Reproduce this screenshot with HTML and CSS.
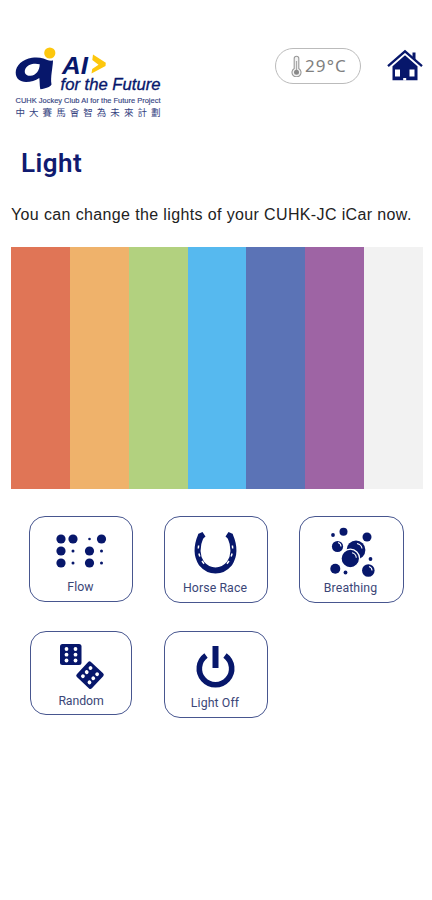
FILE: index.html
```html
<!DOCTYPE html>
<html lang="en">
<head>
<meta charset="utf-8">
<meta name="viewport" content="width=device-width, initial-scale=1">
<title>Light</title>
<link rel="stylesheet" href="styles.css">
</head>
<body>
<header class="top">
  <svg class="logo" viewBox="14 44 150 76" role="img" aria-label="AI for the Future">
    <circle cx="49.800" cy="53" r="5.600" fill="#fdc70d"/>
    <path class="ink" fill-rule="evenodd" d="M43.500 58.500C40 57.300 36 57.200 32 57.700C22.500 59.200 15.700 65.500 15.700 72.500C15.700 78.500 20 82 26 82C31 82 35.500 80.500 39.300 78C39.800 81.500 39.500 85 40.300 89.300C46 88.500 50 87 51.500 84.500C50.300 77 52.800 68 53 60.500C49.500 61 46.500 60 43.500 58.500ZM39.700 64.200C39.700 70 36 75.600 30.500 75.800C25.500 76 23.800 72.500 25.300 69C27.500 64.500 33.500 62.700 39.700 64.200Z"/>
    <text class="logo-ai" x="62" y="73.500" textLength="26" lengthAdjust="spacingAndGlyphs">AI</text>
    <path d="M93 54.500L105.800 62.800L105.500 66L91.500 73.500L92.200 69L98.500 64.700L92.300 60Z" fill="#fdc70d"/>
    <text class="logo-future" x="60.500" y="90" textLength="100" lengthAdjust="spacingAndGlyphs">for the Future</text>
    <text class="logo-project" x="15.500" y="103.400" textLength="145" lengthAdjust="spacingAndGlyphs">CUHK Jockey Club AI for the Future Project</text>
    <text class="logo-cjk" x="15.500" y="116.300" textLength="145">中大賽馬會智為未來計劃</text>
  </svg>
  <div class="temp">
    <svg class="thermo" viewBox="0 0 12 22">
      <path d="M3.700 13.500V3.500a2.300 2.300 0 0 1 4.600 0v10a4.500 4.500 0 1 1-4.600 0Z" fill="#f2f2f2" stroke="#999" stroke-width="1.100"/>
      <path d="M6 6v11" fill="none" stroke="#aaa" stroke-width="1.200"/>
      <circle cx="6" cy="17.300" r="2.500" fill="#888"/>
    </svg>
    <span>29°C</span>
  </div>
  <svg class="home" viewBox="0 0 36 32">
    <path class="ink" d="M5.500 17.200L18 6.200L30.500 17.200V31.200H5.500Z"/>
    <path d="M1.500 17.500L18 3L34.500 17.500" fill="none" stroke="#fff" stroke-width="3.800"/>
    <path d="M1 17.200L18 2.300L35 17.200" fill="none" stroke="#07176b" stroke-width="2.300"/>
    <path class="ink" d="M25.500 3.500h3v7.500l-3-3Z"/>
    <path d="M8 20.500h5v7H8ZM22.500 20.500h5v7h-5ZM16.200 29h3v2.500h-3Z" fill="#fff"/>
  </svg>
</header>
<main>
  <h1>Light</h1>
  <p class="intro">You can change the lights of your CUHK-JC iCar now.</p>
  <div class="colors">
    <i class="red"></i><i class="orange"></i><i class="green"></i><i class="sky"></i><i class="blue"></i><i class="purple"></i><i class="white"></i>
  </div>
  <div class="modes">
    <button class="mode flow">
      <svg viewBox="0 0 104 60">
        <g class="ink"><circle cx="32" cy="21" r="4.600"/><circle cx="44" cy="21" r="4.600"/><circle cx="60.500" cy="21" r="1.300"/><circle cx="72.500" cy="21" r="4.600"/><circle cx="32" cy="33" r="4.600"/><circle cx="44" cy="33" r="1.500"/><circle cx="60.500" cy="33" r="4.600"/><circle cx="72.500" cy="33" r="1.500"/><circle cx="32" cy="45" r="4.600"/><circle cx="44" cy="45" r="1.500"/><circle cx="60.500" cy="45" r="4.600"/><circle cx="72.500" cy="45" r="1.500"/></g>
      </svg>
      <span>Flow</span>
    </button>
    <button class="mode">
      <svg viewBox="0 0 104 60">
        <path d="M37 17.500C32.500 28 32.500 38 37.500 45.500Q43.500 52.500 51.500 52.500Q59.500 52.500 65.500 45.500C70.500 38 70.500 28 66 17.500" fill="none" stroke="#07176b" stroke-width="6"/>
        <path class="ink" d="M34 16l4.500-2 3 4.500-4.500 4ZM69 16l-4.500-2-3 4.500 4.500 4Z"/>
        <path d="M34.600 27.500L34.300 30.500M34.900 35.500L35.800 38.500M38 43L40 45.700M68.400 27.500L68.700 30.500M68.100 35.500L67.200 38.500M65 43L63 45.700" fill="none" stroke="#fff" stroke-width="1.500"/>
      </svg>
      <span>Horse Race</span>
    </button>
    <button class="mode">
      <svg viewBox="0 0 104 60">
        <g class="ink"><circle cx="33" cy="17" r="1.900"/><circle cx="43.500" cy="13.700" r="4"/><circle cx="67" cy="19" r="4.500"/><circle cx="37.500" cy="28.500" r="5.600"/><circle cx="56" cy="32" r="9.400"/><circle cx="50.300" cy="40.500" r="9.300" stroke="#fff" stroke-width="1.300"/><circle cx="70.500" cy="41" r="1.900"/><circle cx="35.300" cy="50.700" r="5"/><circle cx="45.500" cy="54.500" r="1.900"/><circle cx="68.300" cy="52.500" r="6.300"/></g>
        <path d="M38 24.500q3 1 3 4M57 25.500q4.500 1 5 5M52 34.800q4 1 4.300 5M69 48.500q3 1 3 4" fill="none" stroke="#fff" stroke-width="1.100"/>
      </svg>
      <span>Breathing</span>
    </button>
    <button class="mode random">
      <svg viewBox="0 0 104 60">
        <rect class="ink" x="31" y="11" width="21.500" height="21" rx="2.500"/>
        <g fill="#fff"><circle cx="37.500" cy="16" r="1.900"/><circle cx="46.500" cy="16" r="1.900"/><circle cx="37.500" cy="21.700" r="1.900"/><circle cx="46.500" cy="21.700" r="1.900"/><circle cx="37.500" cy="27.500" r="1.900"/><circle cx="46.500" cy="27.500" r="1.900"/></g>
        <g transform="translate(61 42.200) rotate(-47)">
          <rect class="ink" x="-10.300" y="-10.300" width="20.600" height="20.600" rx="2"/>
          <g fill="#fff"><circle cx="-5.600" cy="-4.500" r="1.900"/><circle cx="-5.600" cy="4.500" r="1.900"/><circle cx="0" cy="-4.500" r="1.900"/><circle cx="0" cy="4.500" r="1.900"/><circle cx="5.600" cy="-4.500" r="1.900"/><circle cx="5.600" cy="4.500" r="1.900"/></g>
        </g>
      </svg>
      <span>Random</span>
    </button>
    <button class="mode">
      <svg viewBox="0 0 104 60">
        <path d="M42 22.500A16.200 16.200 0 1 0 61 22.500" fill="none" stroke="#07176b" stroke-width="5.600"/>
        <path d="M51.500 13V35" stroke="#07176b" stroke-width="6"/>
      </svg>
      <span>Light Off</span>
    </button>
  </div>
</main>
</body>
</html>
```
FILE: styles.css
```css
* { box-sizing: border-box; }
body {
  margin: 0;
  min-height: 900px;
  background: #fff;
  font-family: Roboto, sans-serif;
}
svg { display: block; }
.ink { fill: #07176b; }
.top {
  display: flex;
  align-items: flex-start;
  padding: 44px 9px 0 14px;
}
.logo { width: 150px; height: 76px; }
.logo text { fill: #07176b; font-family: "Liberation Sans", sans-serif; }
.logo .logo-ai { font-size: 24px; font-weight: bold; font-style: italic; }
.logo .logo-future { font-size: 17px; font-style: italic; stroke: #07176b; stroke-width: .35px; }
.logo .logo-project { font-size: 8px; fill: #35437f; stroke: #35437f; stroke-width: .15px; }
.logo .logo-cjk { font-family: "Noto Sans CJK TC", sans-serif; font-size: 9.5px; fill: #35437f; }
.temp {
  display: flex;
  align-items: center;
  gap: 2px;
  width: 86px;
  height: 36px;
  margin: 4px 0 0 111px;
  padding-left: 14px;
  border: 1.5px solid #bbb;
  border-radius: 18px;
  color: #808080;
  font: 17px/34px "Noto Sans", sans-serif;
  letter-spacing: 1.1px;
}
.thermo { width: 13px; height: 22px; }
.home { width: 36px; height: 32px; margin: 5px 0 0 auto; }
h1 {
  margin: 27px 0 0 21px;
  color: #101b70;
  font-size: 26px;
  font-weight: 600;
  line-height: 32px;
  letter-spacing: .45px;
}
.intro {
  margin: 24px 0 0 11px;
  color: #222;
  font: 16px/24px "Liberation Sans", sans-serif;
  letter-spacing: .37px;
  white-space: nowrap;
}
.colors {
  display: grid;
  grid-template-columns: repeat(7, 1fr);
  height: 242px;
  margin: 20px 9px 0 11px;
}
.red { background: #e07556; }
.orange { background: #efb26b; }
.green { background: #b2d17f; }
.sky { background: #56b9ef; }
.blue { background: #5b73b6; }
.purple { background: #9e64a4; }
.white { background: #f2f2f2; }
.modes {
  display: grid;
  grid-template-columns: 104px 104px 105px;
  column-gap: 31px;
  row-gap: 28px;
  margin: 27px 0 0 29px;
  align-items: start;
}
.mode {
  display: flex;
  flex-direction: column;
  align-items: center;
  height: 87px;
  padding: 0;
  border: 1.2px solid #47568f;
  border-radius: 16px;
  background: #fff;
  color: #3b4677;
  font: 12.3px/18px Roboto, sans-serif;
  letter-spacing: .1px;
}
.mode svg { width: 104px; height: 60px; margin-top: 1px; flex: none; }
.mode span { margin: 1px 2px 0 0; }
.flow { height: 86px; }
.flow span { margin: 0 1px 0 0; }
.random { width: 102px; height: 84px; margin-left: 1px; }
.random span { margin: -1px 0 0; letter-spacing: -.1px; }
```
